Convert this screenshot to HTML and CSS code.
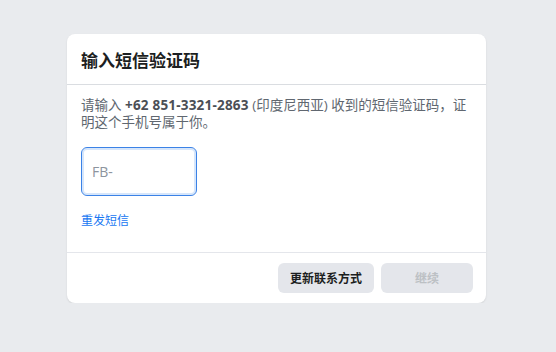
FILE: index.html
```html
<!DOCTYPE html>
<html lang="zh-CN">
<head>
    <meta charset="UTF-8">
    <meta name="viewport" content="width=device-width, initial-scale=1.0">
    <title>输入短信验证码</title>
    <link rel="stylesheet" href="styles.css">
</head>
<body>
    <div class="card">
        <div class="card-header">
            <h2>输入短信验证码</h2>
        </div>

        <div class="card-body">
            <p class="hint">请输入 <strong>+62 851-3321-2863</strong> (印度尼西亚) 收到的短信验证码，证明这个手机号属于你。</p>
            <input class="code-input" type="text" placeholder="FB-">
            <a href="#" class="resend">重发短信</a>
        </div>

        <div class="card-footer">
            <button class="btn">更新联系方式</button>
            <button class="btn btn-primary" disabled>继续</button>
        </div>
    </div>
</body>
</html>
```

FILE: styles.css
```css
* { margin: 0; padding: 0; box-sizing: border-box; }
body { font-family: 'Open Sans', 'Noto Sans CJK SC', sans-serif; background: #e9ebee; padding: 34px 0 0 67px; }
.card { width: 419px; background: white; border-radius: 8px; box-shadow: 0 1px 2px rgba(0,0,0,0.1); }
.card-header { height: 51px; padding: 0 14px; display: flex; align-items: center; border-bottom: 1px solid #dadde1; }
.card-header h2 { font-size: 17px; font-weight: bold; color: #1c1e21; }
.card-body { padding: 12px 16px 23px 14px; display: flex; flex-direction: column; align-items: flex-start; }
.hint { font-size: 13.5px; line-height: 17px; color: #606770; }
.hint strong { color: #4b4f56; letter-spacing: 0.2px; }
.code-input { margin-top: 16px; width: 116px; height: 49px; padding: 0 10px; border: 1px solid #3b82e6; border-radius: 6px; box-shadow: inset 0 0 0 2px #d6e6fb; font-family: inherit; font-size: 14px; color: #1c1e21; outline: none; }
.code-input::placeholder { color: #8d949e; }
.resend { margin-top: 16px; font-size: 12px; line-height: 17px; color: #1877f2; text-decoration: none; }
.card-footer { border-top: 1px solid #e4e6eb; padding: 10px 13px 10px 0; display: flex; justify-content: flex-end; gap: 7px; }
.btn { height: 30px; padding: 0 12px; border: none; border-radius: 6px; background: #e4e6eb; color: #1c1e21; font-family: inherit; font-size: 12px; font-weight: bold; cursor: pointer; }
.btn-primary { width: 92px; }
.btn:disabled { color: #bcc0c4; cursor: default; }
```
